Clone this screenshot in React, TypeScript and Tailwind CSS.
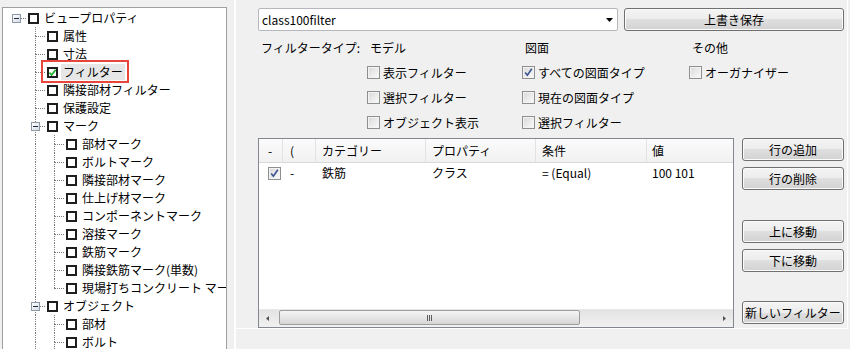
import React from 'react';

const F = "font-['Noto_Sans_CJK_JP','Noto_Sans',sans-serif]";

type TNode = { l: number; label: string; exp?: boolean; checked?: boolean; selected?: boolean; last?: boolean };

const tree: TNode[] = [
  { l: 0, label: 'ビュープロパティ', exp: true },
  { l: 1, label: '属性' },
  { l: 1, label: '寸法' },
  { l: 1, label: 'フィルター', checked: true, selected: true },
  { l: 1, label: '隣接部材フィルター' },
  { l: 1, label: '保護設定' },
  { l: 1, label: 'マーク', exp: true },
  { l: 2, label: '部材マーク' },
  { l: 2, label: 'ボルトマーク' },
  { l: 2, label: '隣接部材マーク' },
  { l: 2, label: '仕上げ材マーク' },
  { l: 2, label: 'コンポーネントマーク' },
  { l: 2, label: '溶接マーク' },
  { l: 2, label: '鉄筋マーク' },
  { l: 2, label: '隣接鉄筋マーク(単数)' },
  { l: 2, label: '現場打ちコンクリート マーク', last: true },
  { l: 1, label: 'オブジェクト', exp: true },
  { l: 2, label: '部材' },
  { l: 2, label: 'ボルト' },
  { l: 2, label: '溶接' },
];

function Expander() {
  return (
    <div className="absolute left-[5px] top-[5px] w-[9px] h-[9px] border border-[#8e99a8] bg-[linear-gradient(135deg,#ffffff,#d6dce4)] flex items-center justify-center">
      <div className="w-[5px] h-px bg-[#1c2a40]" />
    </div>
  );
}

function Cell({ vTop, vBottom, h, exp }: { vTop?: boolean; vBottom?: boolean; h?: boolean; exp?: boolean }) {
  return (
    <div className="relative w-[19px] h-[18px] shrink-0">
      {vTop && <div className="absolute left-[9px] top-0 h-[9px] border-l border-dotted border-[#7a7a7a]" />}
      {vBottom && <div className="absolute left-[9px] top-[9px] h-[9px] border-l border-dotted border-[#7a7a7a]" />}
      {h && <div className="absolute left-[9px] top-[9px] w-[10px] border-t border-dotted border-[#7a7a7a]" />}
      {exp && <Expander />}
    </div>
  );
}

function TreeRow({ n }: { n: TNode }) {
  const cells: React.ReactNode[] = [];
  for (let i = 0; i <= n.l; i++) {
    if (i === n.l) {
      if (n.l === 0) cells.push(<Cell key={i} h exp />);
      else cells.push(<Cell key={i} vTop vBottom={!n.last} h exp={n.exp} />);
    } else if (i === 0) {
      cells.push(<Cell key={i} />);
    } else {
      cells.push(<Cell key={i} vTop vBottom />);
    }
  }
  return (
    <div className="relative flex items-center h-[18px] pl-[4px]">
      {cells}
      <div className="ml-[2px] w-[11px] h-[11px] border-2 border-[#1e1e1e] bg-white shrink-0 flex items-center justify-center">
        {n.checked && (
          <svg width="7" height="7" viewBox="0 0 7 7">
            <path d="M0.4 3.6 L2.6 6 L6.6 0.8" stroke="#1db52a" strokeWidth="1.7" fill="none" />
          </svg>
        )}
      </div>
      <span
        className={`ml-[3px] px-[2px] text-[12px] leading-[16px] whitespace-nowrap text-black ${n.selected ? 'bg-[#e6e6e6]' : ''}`}
      >
        {n.label}
      </span>
      {n.selected && <div className="absolute left-[38px] top-[-3px] w-[88px] h-[23px] border-2 border-[#e8463c]" />}
    </div>
  );
}

function WinCheck({ checked }: { checked?: boolean }) {
  return (
    <div className="relative w-[13px] h-[13px] border border-[#8e8f8f] bg-[linear-gradient(135deg,#d8d8d8,#fbfbfb)] shadow-[inset_0_0_0_1px_#f3f3f3] shrink-0">
      {checked && (
        <svg className="absolute left-0 top-0" width="11" height="11" viewBox="0 0 11 11">
          <path d="M2.2 5.4 L4.4 8.2 L8.8 1.8" stroke="#3a5390" strokeWidth="1.6" fill="none" />
        </svg>
      )}
    </div>
  );
}

function WinButton({ children, className = '' }: { children: React.ReactNode; className?: string }) {
  return (
    <div
      className={`h-[23px] rounded-[3px] border border-[#707070] bg-[linear-gradient(to_bottom,#f4f4f4_0%,#ececec_50%,#dfdfdf_50%,#d2d2d2_100%)] shadow-[inset_0_0_0_1px_#fbfbfb] flex items-center justify-center text-[12px] leading-[16px] text-black whitespace-nowrap ${className}`}
    >
      {children}
    </div>
  );
}

function CheckItem({ label, checked }: { label: string; checked?: boolean }) {
  return (
    <div className="flex items-center">
      <WinCheck checked={checked} />
      <span className="ml-[3px] text-[12px] leading-[16px] text-black whitespace-nowrap">{label}</span>
    </div>
  );
}

const cols = ['w-[24px] pl-[9px]', 'w-[33px] pl-[7px]', 'w-[110px] pl-[6px]', 'w-[110px] pl-[6px]', 'w-[111px] pl-[6px]', 'flex-1 pl-[5px]'];

export default function App() {
  return (
    <div className={`w-[850px] h-[349px] bg-[#f0f0f0] flex overflow-hidden ${F}`}>
      {/* Tree */}
      <div className="ml-[2px] mt-[7px] w-[225px] h-[342px] shrink-0 bg-white border-l border-t border-r border-[#a0a0a0] overflow-hidden pt-[1px]">
        {tree.map((n, i) => (
          <TreeRow key={i} n={n} />
        ))}
      </div>

      {/* splitter */}
      <div className="ml-[7px] w-[2px] h-full shrink-0 border-l border-[#d2d2d2] border-r border-white" />

      {/* Right panel */}
      <div className="w-[612px] h-[329px] shrink-0 border-r border-b border-white pl-[22px] pr-[3px] pt-[8px] flex flex-col">
        <div className="flex gap-[6px]">
          <div className="w-[360px] h-[23px] border border-[#b5b7bd] rounded-[2px] bg-white flex items-center pl-[3px] pr-[4px]">
            <span className="flex-1 text-[12px] leading-[16px] text-black">class100filter</span>
            <svg width="7" height="4" viewBox="0 0 7 4">
              <path d="M0 0 H7 L3.5 4 Z" fill="#000" />
            </svg>
          </div>
          <WinButton className="w-[220px]">上書き保存</WinButton>
        </div>

        <div className="mt-[8px] h-[18px] flex items-center text-[12px] leading-[16px] text-black">
          <div className="w-[109px] pl-[3px] whitespace-nowrap">フィルタータイプ:</div>
          <div className="w-[155px] pl-[3px]">モデル</div>
          <div className="w-[167px] pl-[3px]">図面</div>
          <div className="pl-[3px]">その他</div>
        </div>

        <div className="mt-[3px] flex flex-col">
          <div className="h-[25px] flex items-center">
            <div className="w-[109px]" />
            <div className="w-[155px]"><CheckItem label="表示フィルター" /></div>
            <div className="w-[167px]"><CheckItem label="すべての図面タイプ" checked /></div>
            <div><CheckItem label="オーガナイザー" /></div>
          </div>
          <div className="h-[25px] flex items-center">
            <div className="w-[109px]" />
            <div className="w-[155px]"><CheckItem label="選択フィルター" /></div>
            <div className="w-[167px]"><CheckItem label="現在の図面タイプ" /></div>
          </div>
          <div className="h-[25px] flex items-center">
            <div className="w-[109px]" />
            <div className="w-[155px]"><CheckItem label="オブジェクト表示" /></div>
            <div className="w-[167px]"><CheckItem label="選択フィルター" /></div>
          </div>
        </div>

        <div className="mt-[3px] flex gap-[8px]">
          {/* table */}
          <div className="w-[476px] h-[190px] border border-[#828790] bg-white flex flex-col overflow-hidden">
            <div className="h-[24px] flex border-b border-[#d9d9d9] bg-[linear-gradient(to_bottom,#fbfbfb,#f1f1f1)] text-[12px] leading-[16px] text-black">
              {['-', '(', 'カテゴリー', 'プロパティ', '条件', '値'].map((t, i) => (
                <div key={i} className={`${cols[i]} flex items-center whitespace-nowrap ${i < 5 ? 'border-r border-[#e2e2e2]' : ''}`}>
                  {t}
                </div>
              ))}
            </div>
            <div className="h-[20px] flex text-[12px] leading-[16px] text-black">
              <div className={`${cols[0]} flex items-center`}><WinCheck checked /></div>
              <div className={`${cols[1]} flex items-center`}>-</div>
              <div className={`${cols[2]} flex items-center`}>鉄筋</div>
              <div className={`${cols[3]} flex items-center`}>クラス</div>
              <div className={`${cols[4]} flex items-center whitespace-nowrap`}>= (Equal)</div>
              <div className={`${cols[5]} flex items-center whitespace-nowrap`}>100 101</div>
            </div>
            <div className="flex-1" />
            {/* scrollbar */}
            <div className="h-[18px] flex bg-[linear-gradient(to_bottom,#e3e3e3,#f1f1f1)] border-t border-[#e8e8e8]">
              <div className="w-[17px] flex items-center justify-center">
                <svg width="3" height="5" viewBox="0 0 3 5"><path d="M3 0 V5 L0 2.5 Z" fill="#505050" /></svg>
              </div>
              <div className="ml-[3px] mt-[0px] w-[301px] h-[15px] rounded-[2px] border border-[#9d9d9d] bg-[linear-gradient(to_bottom,#f4f4f4,#e6e6e6_50%,#d6d6d6)] flex items-center justify-center gap-[1px]">
                <div className="w-px h-[6px] bg-[#5a5a5a]" />
                <div className="w-px h-[6px] bg-[#5a5a5a]" />
                <div className="w-px h-[6px] bg-[#5a5a5a]" />
              </div>
              <div className="flex-1" />
              <div className="w-[17px] flex items-center justify-center">
                <svg width="3" height="5" viewBox="0 0 3 5"><path d="M0 0 V5 L3 2.5 Z" fill="#505050" /></svg>
              </div>
            </div>
          </div>

          {/* buttons */}
          <div className="w-[102px] flex flex-col">
            <WinButton>行の追加</WinButton>
            <WinButton className="mt-[6px]">行の削除</WinButton>
            <WinButton className="mt-[30px]">上に移動</WinButton>
            <WinButton className="mt-[6px]">下に移動</WinButton>
            <WinButton className="mt-[29px]">新しいフィルター</WinButton>
          </div>
        </div>
      </div>
    </div>
  );
}
